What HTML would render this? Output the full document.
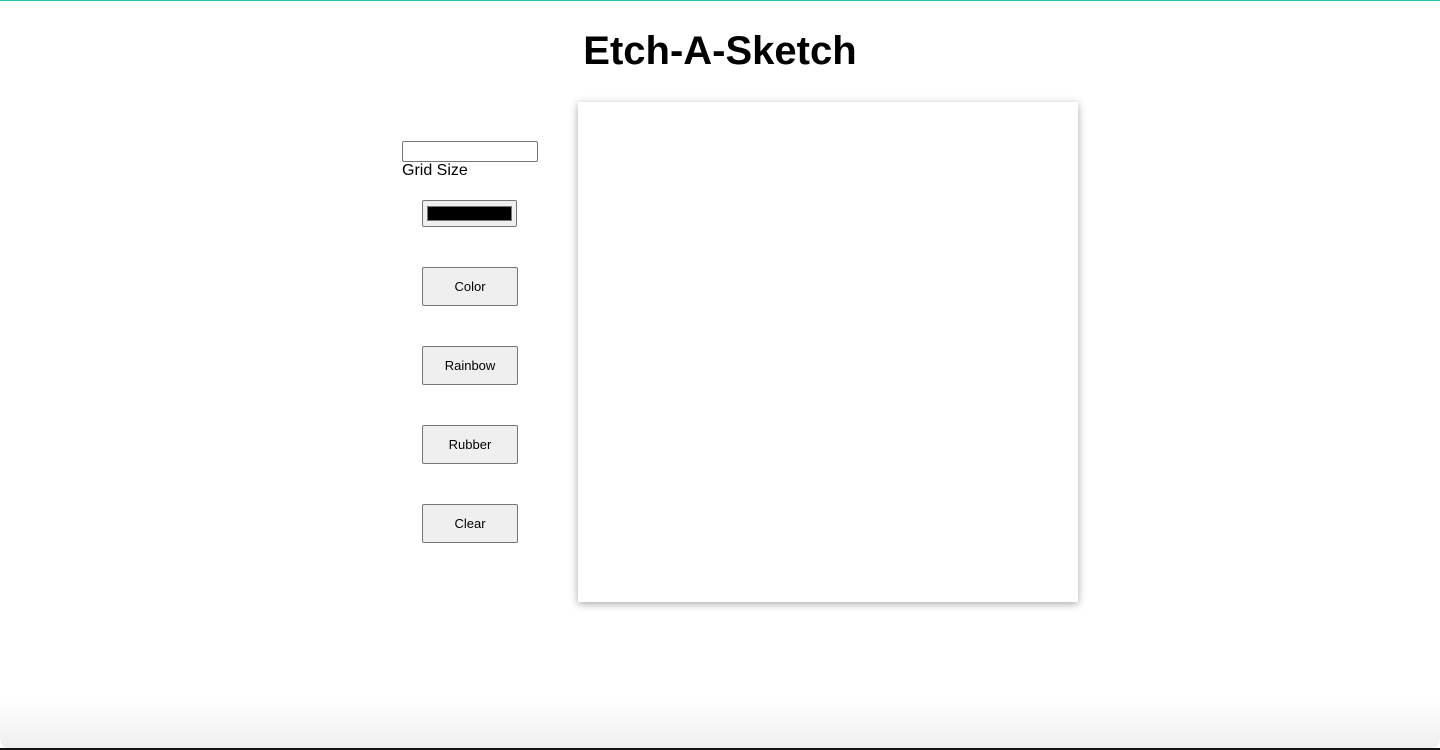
<!DOCTYPE html>
<html><head><style>
html,body{margin:0;padding:0;width:1440px;height:750px;overflow:hidden;background:#fff;font-family:"Liberation Sans",sans-serif;}
.top{position:absolute;left:0;top:0;width:1440px;height:1px;background:#1cc8a8;}
.bot{position:absolute;left:0;top:700px;width:1440px;height:50px;background:linear-gradient(#fff,#eee);border-radius:0 0 12px 12px;}
.botl{position:absolute;left:0;top:748px;width:1440px;height:2px;background:#111;}
h1{position:absolute;left:0;width:1440px;top:29px;margin:0;text-align:center;font-size:40px;font-weight:bold;}
.inp{position:absolute;left:402px;top:141px;width:136px;height:21px;border:1px solid #767676;border-radius:2px;box-sizing:border-box;}
.lbl{position:absolute;left:402px;top:162px;font-size:16px;}
.clr{position:absolute;left:422px;top:200px;width:95px;height:27px;box-sizing:border-box;border:1px solid #767676;border-radius:2px;background:#efefef;}
.clr div{position:absolute;left:4px;top:5px;right:4px;bottom:5px;background:#000;border:1px solid #777;}
.btn{position:absolute;left:422px;width:96px;height:39px;box-sizing:border-box;border:1px solid #767676;border-radius:2px;background:#efefef;font-size:13px;text-align:center;line-height:37px;}
.pad{position:absolute;left:578px;top:102px;width:500px;height:500px;background:#fff;box-shadow:0 2px 8px rgba(0,0,0,.35);}
</style></head><body>
<div class="top"></div>
<h1>Etch-A-Sketch</h1>
<div class="inp"></div>
<div class="lbl">Grid Size</div>
<div class="clr"><div></div></div>
<div class="btn" style="top:267px">Color</div>
<div class="btn" style="top:346px">Rainbow</div>
<div class="btn" style="top:425px">Rubber</div>
<div class="btn" style="top:504px">Clear</div>
<div class="pad"></div>
<div class="bot"></div>
<div class="botl"></div>
</body></html>
